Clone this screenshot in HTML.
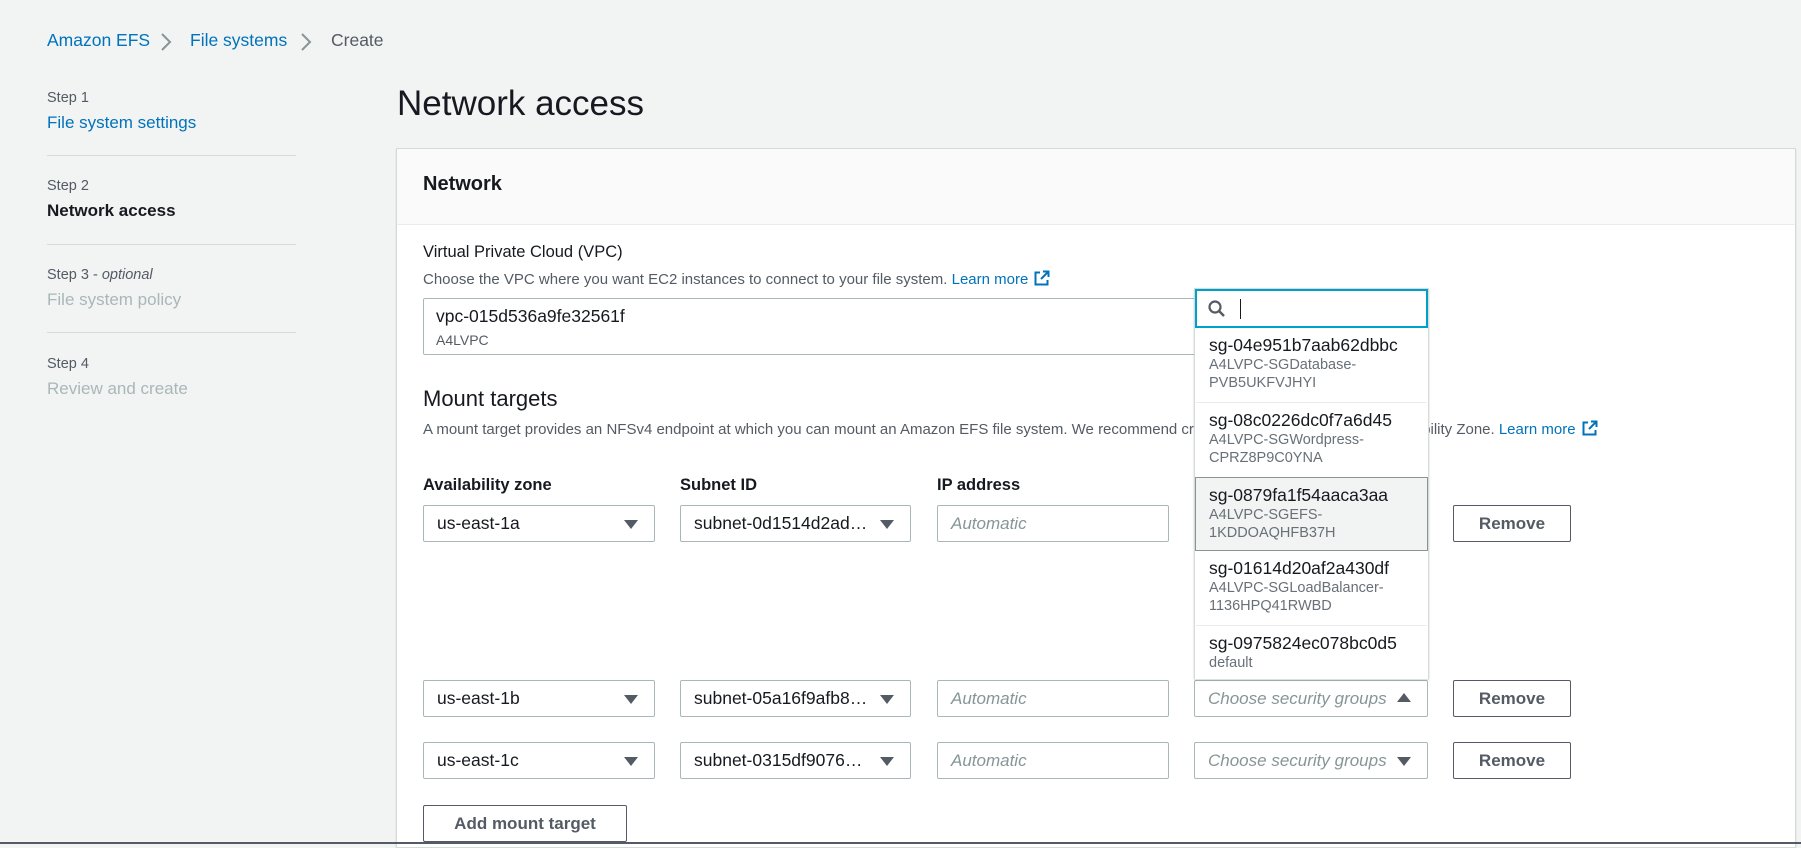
<!DOCTYPE html>
<html><head><meta charset="utf-8"><style>
*{box-sizing:border-box;margin:0;padding:0}
body{width:1801px;height:844px;overflow:hidden;background:#f2f3f3;font-family:"Liberation Sans",Arial,sans-serif;color:#16191f;position:relative}
.a{position:absolute;white-space:nowrap}
.link{color:#0073bb}
.lbl{font-size:14.5px;color:#545b64}
.sel{position:absolute;height:37px;border:1px solid #aab7b8;border-radius:2px;background:#fff;font-size:17.5px;line-height:35px;padding-left:13px;color:#16191f}
.sel .tri{position:absolute;right:16px;top:14px;width:0;height:0;border-left:7px solid transparent;border-right:7px solid transparent;border-top:9px solid #545b64}
.sel .up{border-top:0;border-bottom:9px solid #545b64;top:12px}
.ph{color:#879596;font-style:italic;font-size:17px}
.btn{position:absolute;height:37px;border:1px solid #545b64;border-radius:2px;background:#fff;font-weight:bold;font-size:17px;line-height:35px;text-align:center;color:#545b64}
.hd{font-weight:bold;font-size:16.5px}
.opt{position:absolute;left:1px;width:231px;border-top:1px solid #eaeded;padding:6px 0 0 13px}
.opt .m{font-size:17.5px;color:#16191f;line-height:22px}
.opt .s{font-size:14.5px;color:#687078;line-height:18px}
.ext{display:inline-block;vertical-align:-2px;margin-left:6px}
</style></head><body>
<div class="a link" style="left:47px;top:30px;font-size:17.5px">Amazon EFS</div>
<svg class="a" style="left:160px;top:32px" width="12" height="20"><path d="M2 2 L10 10 L2 18" fill="none" stroke="#879596" stroke-width="2"/></svg>
<div class="a link" style="left:190px;top:30px;font-size:17.5px">File systems</div>
<svg class="a" style="left:300px;top:32px" width="12" height="20"><path d="M2 2 L10 10 L2 18" fill="none" stroke="#879596" stroke-width="2"/></svg>
<div class="a" style="left:331px;top:30px;font-size:17.5px;color:#545b64">Create</div>

<div class="a lbl" style="left:47px;top:90px">Step 1</div>
<div class="a link" style="left:47px;top:113px;font-size:17px">File system settings</div>
<div class="a" style="left:47px;top:155px;width:249px;height:1px;background:#d5dbdb"></div>
<div class="a lbl" style="left:47px;top:178px">Step 2</div>
<div class="a" style="left:47px;top:201px;font-size:17px;font-weight:bold">Network access</div>
<div class="a" style="left:47px;top:244px;width:249px;height:1px;background:#d5dbdb"></div>
<div class="a lbl" style="left:47px;top:267px">Step 3 - <i>optional</i></div>
<div class="a" style="left:47px;top:290px;font-size:17px;color:#aab7b8">File system policy</div>
<div class="a" style="left:47px;top:332px;width:249px;height:1px;background:#d5dbdb"></div>
<div class="a lbl" style="left:47px;top:356px">Step 4</div>
<div class="a" style="left:47px;top:379px;font-size:17px;color:#aab7b8">Review and create</div>

<div class="a" style="left:397px;top:84px;font-size:35px;color:#16191f">Network access</div>

<div class="a" style="left:396px;top:148px;width:1400px;height:700px;background:#fff;border:1px solid #d5dbdb;box-shadow:0 1px 1px rgba(0,28,36,.2)"></div>
<div class="a" style="left:397px;top:149px;width:1398px;height:76px;background:#fafafa;border-bottom:1px solid #eaeded"></div>
<div class="a" style="left:423px;top:173px;font-size:20px;font-weight:bold">Network</div>

<div class="a" style="left:423px;top:243px;font-size:16.5px">Virtual Private Cloud (VPC)</div>
<div class="a" style="left:423px;top:270px;font-size:15px;color:#545b64">Choose the VPC where you want EC2 instances to connect to your file system. <span class="link">Learn more</span><svg class="ext" width="16" height="16"><path d="M9 1.5h5.5v5.5M14.5 1.5L7 9M6 2.5H1.5v12h12V10" fill="none" stroke="#0073bb" stroke-width="2"/></svg></div>
<div class="a" style="left:423px;top:298px;width:880px;height:57px;border:1px solid #aab7b8;border-radius:2px;background:#fff"></div>
<div class="a" style="left:436px;top:306px;font-size:17.5px">vpc-015d536a9fe32561f</div>
<div class="a" style="left:436px;top:332px;font-size:14px;color:#545b64">A4LVPC</div>

<div class="a" style="left:423px;top:386px;font-size:22px">Mount targets</div>
<div class="a" style="left:423px;top:420px;font-size:15px;color:#545b64">A mount target provides an NFSv4 endpoint at which you can mount an Amazon EFS file system. We recommend creating one mount target per Availability Zone. <span class="link">Learn more</span><svg class="ext" width="16" height="16"><path d="M9 1.5h5.5v5.5M14.5 1.5L7 9M6 2.5H1.5v12h12V10" fill="none" stroke="#0073bb" stroke-width="2"/></svg></div>

<div class="a hd" style="left:423px;top:476px">Availability zone</div>
<div class="a hd" style="left:680px;top:476px">Subnet ID</div>
<div class="a hd" style="left:937px;top:476px">IP address</div>

<div class="sel" style="left:423px;top:505px;width:232px">us-east-1a<span class="tri"></span></div>
<div class="sel" style="left:680px;top:505px;width:231px">subnet-0d1514d2ad…<span class="tri"></span></div>
<div class="sel" style="left:937px;top:505px;width:232px"><span class="ph">Automatic</span></div>
<div class="btn" style="left:1453px;top:505px;width:118px">Remove</div>

<div class="sel" style="left:423px;top:680px;width:232px">us-east-1b<span class="tri"></span></div>
<div class="sel" style="left:680px;top:680px;width:231px">subnet-05a16f9afb8…<span class="tri"></span></div>
<div class="sel" style="left:937px;top:680px;width:232px"><span class="ph">Automatic</span></div>
<div class="sel" style="left:1194px;top:680px;width:234px"><span class="ph">Choose security groups</span><span class="tri up"></span></div>
<div class="btn" style="left:1453px;top:680px;width:118px">Remove</div>

<div class="sel" style="left:423px;top:742px;width:232px">us-east-1c<span class="tri"></span></div>
<div class="sel" style="left:680px;top:742px;width:231px">subnet-0315df9076…<span class="tri"></span></div>
<div class="sel" style="left:937px;top:742px;width:232px"><span class="ph">Automatic</span></div>
<div class="sel" style="left:1194px;top:742px;width:234px"><span class="ph">Choose security groups</span><span class="tri"></span></div>
<div class="btn" style="left:1453px;top:742px;width:118px">Remove</div>

<div class="btn" style="left:423px;top:805px;width:204px">Add mount target</div>

<div class="a" style="left:1194px;top:288px;width:235px;height:391px;background:#fff;border:1px solid #d5dbdb;border-bottom:0;box-shadow:0 1px 2px rgba(0,28,36,.2)">
 <div style="position:absolute;left:0;top:0;width:233px;height:39px;border:2px solid #00a1c9;background:#fff"></div>
 <svg style="position:absolute;left:12px;top:10px" width="20" height="20"><circle cx="8" cy="8" r="5.5" fill="none" stroke="#545b64" stroke-width="2.2"/><path d="M12 12l5 5" stroke="#545b64" stroke-width="2.5"/></svg>
 <div style="position:absolute;left:45px;top:10px;width:1px;height:20px;background:#16191f"></div>
 <div class="opt" style="top:39px;height:74px;border-top:0"><div class="m">sg-04e951b7aab62dbbc</div><div class="s">A4LVPC-SGDatabase-<br>PVB5UKFVJHYI</div></div>
 <div class="opt" style="top:113px;height:75px"><div class="m">sg-08c0226dc0f7a6d45</div><div class="s">A4LVPC-SGWordpress-<br>CPRZ8P9C0YNA</div></div>
 <div class="opt" style="top:188px;height:74px;background:#f2f3f3;border:1px solid #879596;left:0;width:233px"><div class="m">sg-0879fa1f54aaca3aa</div><div class="s">A4LVPC-SGEFS-<br>1KDDOAQHFB37H</div></div>
 <div class="opt" style="top:262px;height:74px;border-top:0"><div class="m">sg-01614d20af2a430df</div><div class="s">A4LVPC-SGLoadBalancer-<br>1136HPQ41RWBD</div></div>
 <div class="opt" style="top:336px;height:55px"><div class="m">sg-0975824ec078bc0d5</div><div class="s">default</div></div>
</div>
<div class="a" style="left:0;top:842px;width:1801px;height:2px;background:#545b64"></div>
</body></html>
